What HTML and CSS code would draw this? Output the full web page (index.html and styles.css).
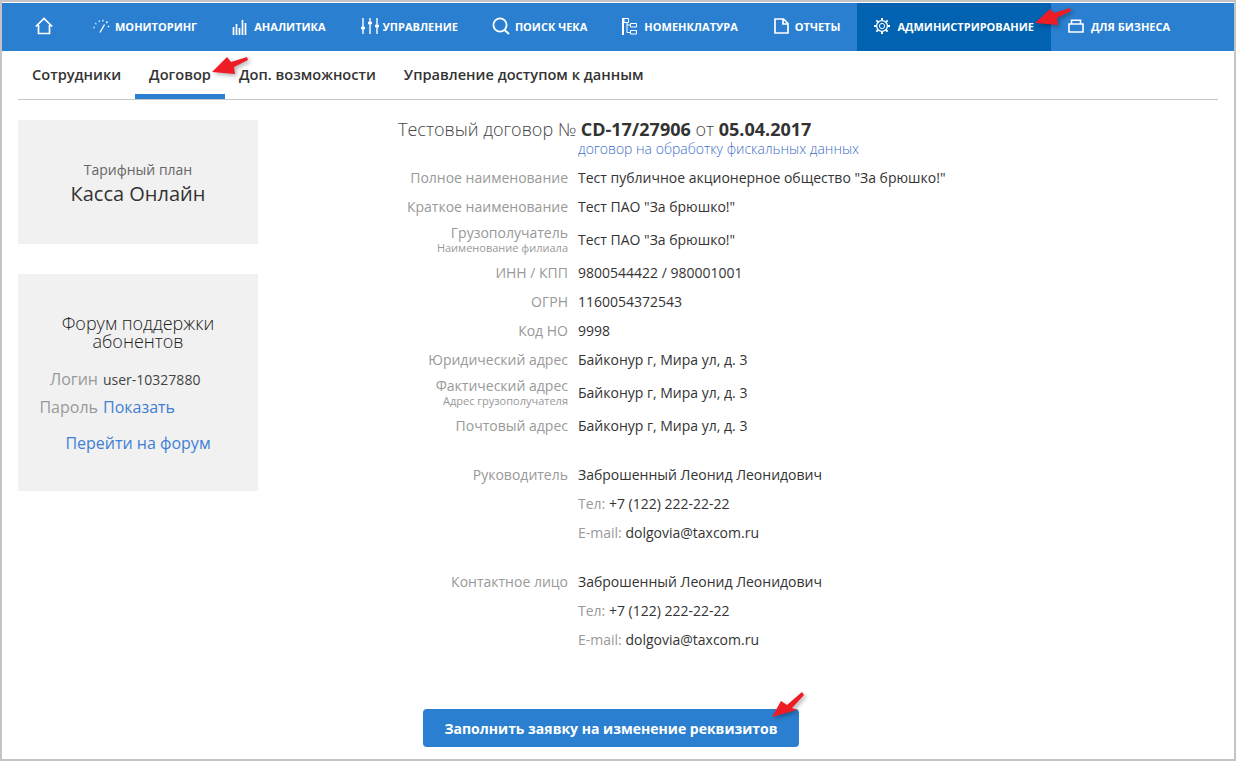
FILE: index.html
```html
<!DOCTYPE html>
<html lang="ru">
<head>
<meta charset="utf-8">
<title>Договор</title>
<link rel="stylesheet" href="styles.css">
</head>
<body>
<div class="frame">
  <nav class="nav">
    <a class="nav-item nav-home"><svg class="ico" width="18" height="18" viewBox="0 0 18 18"><path d="M.8 9.5 9 1.5l8.2 8M3.5 8v8.5h11V8" fill="none" stroke="#fff" stroke-width="1.7"/></svg></a>
    <a class="nav-item nav-wide"><svg class="ico" width="18" height="16" viewBox="0 0 18 16"><g fill="none" stroke="#fff" stroke-width="1.3"><path d="M1 9.5h2" stroke-opacity=".6"/><path d="M3 5 4.5 6.2" stroke-opacity=".7"/><path d="M7 2.5 7.6 4" stroke-opacity=".8"/><path d="M11 1.8 10.8 3.4"/><path d="M15.5 3.5 14.3 5"/><path d="M17 8 16 9"/><path d="M8 14.5 12.5 6.5"/></g></svg>Мониторинг</a>
    <a class="nav-item nav-wide"><svg class="ico ico-7" width="15" height="17" viewBox="0 0 15 17"><path d="M1.5 9v8M4.5 6v11M7.5 10v7M10.5 2v15M13.5 5v12" stroke="#fff" stroke-width="1.7"/></svg>Аналитика</a>
    <a class="nav-item"><svg class="ico ico-4" width="18" height="18" viewBox="0 0 18 18"><path d="M2 1v16M9 1v16M16 1v16" stroke="#fff" stroke-width="1.4"/><path d="M0 11h4M7 6h4M14 9h4" stroke="#fff" stroke-width="2.4"/></svg>Управление</a>
    <a class="nav-item"><svg class="ico" width="18" height="18" viewBox="0 0 18 18"><circle cx="8" cy="8" r="6.6" fill="none" stroke="#fff" stroke-width="1.8"/><path d="M12.5 13 17 17" stroke="#fff" stroke-width="2"/></svg>Поиск чека</a>
    <a class="nav-item"><svg class="ico ico-7" width="16" height="17" viewBox="0 0 16 17"><path d="M2 0v17" stroke="#fff" stroke-width="2"/><path d="M3 .5h4.5v4H3zM9.5 5.5h6v3.5h-6zM9.5 12.5h6v3.5h-6zM6 4.5v10h3.5M6 7h3.5" fill="none" stroke="#fff" stroke-width="1"/></svg>Номенклатура</a>
    <a class="nav-item"><svg class="ico ico-doc" width="15" height="16" viewBox="0 0 15 16"><path d="M1 1h8.5L14 5.5V15H1zM9 1v5h5" fill="none" stroke="#fff" stroke-width="1.7"/></svg>Отчеты</a>
    <a class="nav-item nav-active"><svg class="ico ico-7" width="16" height="16" viewBox="0 0 16 16"><circle cx="8" cy="8" r="5.4" fill="none" stroke="#fff" stroke-width="1.3"/><circle cx="8" cy="8" r="2.6" fill="none" stroke="#fff" stroke-width="1"/><path d="M8 0v2.5M8 13.5V16M0 8h2.5M13.5 8H16M2.4 2.4l1.8 1.8M11.8 11.8l1.8 1.8M13.6 2.4l-1.8 1.8M4.2 11.8l-1.8 1.8" stroke="#fff" stroke-width="2"/></svg>Администрирование</a>
    <a class="nav-item"><svg class="ico ico-7" width="16" height="14" viewBox="0 0 16 14"><path d="M1 5h14v8H1zM3.5 5V1.2h9V5" fill="none" stroke="#fff" stroke-width="1.6"/></svg>Для бизнеса</a>
  </nav>

  <div class="tabs">
    <a class="tab">Сотрудники</a>
    <a class="tab tab-active">Договор</a>
    <a class="tab">Доп. возможности</a>
    <a class="tab">Управление доступом к данным</a>
  </div>

  <div class="content">
    <aside class="side">
      <section class="card card-plan">
        <div class="plan-label">Тарифный план</div>
        <div class="plan-name">Касса Онлайн</div>
      </section>
      <section class="card card-forum">
        <h3 class="forum-title">Форум поддержки абонентов</h3>
        <div class="forum-row forum-login"><span class="forum-key">Логин</span><span class="forum-user">user-10327880</span></div>
        <div class="forum-row forum-pass"><span class="forum-key">Пароль</span><a class="link">Показать</a></div>
        <a class="link forum-go">Перейти на форум</a>
      </section>
    </aside>

    <main class="main">
      <div class="head">
        <div class="head-title">Тестовый договор № <b>CD-17/27906</b> от <b>05.04.2017</b></div>
        <a class="head-sub">договор на обработку фискальных данных</a>
      </div>

      <div class="group">
        <div class="row"><div class="key">Полное наименование</div><div class="val">Тест публичное акционерное общество "За брюшко!"</div></div>
        <div class="row"><div class="key">Краткое наименование</div><div class="val">Тест ПАО "За брюшко!"</div></div>
        <div class="row row-tall"><div class="key">Грузополучатель<small>Наименование филиала</small></div><div class="val">Тест ПАО "За брюшко!"</div></div>
        <div class="row"><div class="key">ИНН / КПП</div><div class="val">9800544422 / 980001001</div></div>
        <div class="row"><div class="key">ОГРН</div><div class="val">1160054372543</div></div>
        <div class="row"><div class="key">Код НО</div><div class="val">9998</div></div>
        <div class="row"><div class="key">Юридический адрес</div><div class="val">Байконур г, Мира ул, д. 3</div></div>
        <div class="row row-tall"><div class="key">Фактический адрес<small>Адрес грузополучателя</small></div><div class="val">Байконур г, Мира ул, д. 3</div></div>
        <div class="row"><div class="key">Почтовый адрес</div><div class="val">Байконур г, Мира ул, д. 3</div></div>
      </div>

      <div class="group">
        <div class="row"><div class="key">Руководитель</div><div class="val">Заброшенный Леонид Леонидович</div></div>
        <div class="row"><div class="key"></div><div class="val"><span class="muted">Тел:</span> +7 (122) 222-22-22</div></div>
        <div class="row"><div class="key"></div><div class="val"><span class="muted">E-mail:</span> dolgovia@taxcom.ru</div></div>
      </div>

      <div class="group">
        <div class="row"><div class="key">Контактное лицо</div><div class="val">Заброшенный Леонид Леонидович</div></div>
        <div class="row"><div class="key"></div><div class="val"><span class="muted">Тел:</span> +7 (122) 222-22-22</div></div>
        <div class="row"><div class="key"></div><div class="val"><span class="muted">E-mail:</span> dolgovia@taxcom.ru</div></div>
      </div>

      <div class="actions"><button class="btn" type="button">Заполнить заявку на изменение реквизитов</button></div>
    </main>
  </div>

  <svg class="arrow arrow-nav" width="44" height="26" viewBox="0 0 44 26"><path d="M1 17 16 3 20 7 36 2 37 5 23 12 24 19z" fill="#ee1c25"/></svg>
  <svg class="arrow arrow-tab" width="44" height="26" viewBox="0 0 44 26"><path d="M1 17 16 2 20 7 36 2 37 5 23 12 24 19z" fill="#ee1c25"/></svg>
  <svg class="arrow arrow-btn" width="40" height="30" viewBox="0 0 40 30"><path d="M1 27 10 11 16 15 31 2 33 5 21 18 26 20z" fill="#ee1c25"/></svg>
</div>
</body>
</html>
```

FILE: styles.css
```css
* { box-sizing: border-box; }
html, body { margin: 0; padding: 0; background: #fff; }
body { font-family: "Open Sans", sans-serif; color: #333; }

.frame {
  position: relative;
  width: 1236px;
  height: 761px;
  overflow: hidden;
  border: 2px solid #c4c4c4;
  padding-top: 1px;
}

.nav {
  display: flex;
  height: 48px;
  padding-left: 16px;
  background: #2b7fd0;
}
.nav-item {
  display: flex;
  align-items: center;
  padding: 0 17px 2px;
  color: #fff;
  font-size: 11px;
  font-weight: 700;
  text-transform: uppercase;
  white-space: nowrap;
}
.nav-home { padding-right: 22px; }
.nav-wide { padding-right: 18px; }
.nav-active { background: #0062b1; }
.ico { flex: none; margin-right: 5px; }
.nav-home .ico { margin-right: 0; }
.ico-4 { margin-right: 4px; }
.ico-7 { margin-right: 7px; }
.ico-doc { margin-left: 2px; margin-right: 6px; }

.tabs {
  display: flex;
  height: 49px;
  margin: 0 16px;
  border-bottom: 1px solid #c8c8c8;
}
.tab {
  display: flex;
  align-items: center;
  height: 48px;
  padding: 2px 14px 0;
  font-size: 14.6px;
  font-weight: 600;
  color: #333;
  border-bottom: 5px solid transparent;
  white-space: nowrap;
}
.tab-active { border-bottom-color: #2b7fd0; }

.content {
  display: flex;
  padding: 20px 16px 0;
}
.side {
  flex: none;
  width: 240px;
  display: flex;
  flex-direction: column;
  gap: 30px;
}
.card {
  background: #f1f1f1;
  text-align: center;
}
.card-plan { height: 124px; padding-top: 41px; }
.plan-label { font-size: 14px; color: #666; line-height: 18px; }
.plan-name { font-size: 20px; color: #333; line-height: 30px; }

.card-forum { height: 217px; padding-top: 40px; }
.forum-title {
  margin: 0 auto;
  width: 180px;
  font-size: 18px;
  font-weight: 300;
  line-height: 18px;
  color: #222;
}
.forum-row {
  display: flex;
  align-items: baseline;
  gap: 5px;
  font-size: 16px;
  line-height: 22px;
  text-align: left;
}
.forum-key { width: 80px; text-align: right; color: #999; }
.forum-user { font-size: 14px; color: #444; }
.forum-login { margin-top: 18px; }
.forum-pass { margin-top: 5px; }
.link { color: #3f7fd4; }
.forum-go { display: block; margin-top: 14px; font-size: 16px; line-height: 22px; }

.main { flex: 1; min-width: 0; }
.head { padding-left: 140px; }
.head-title { font-size: 18px; font-weight: 300; line-height: 18px; color: #444; white-space: nowrap; }
.head-title b { font-weight: 700; color: #333; }
.head-sub {
  display: block;
  margin-top: 2px;
  margin-left: 180px;
  font-size: 14px;
  font-weight: 300;
  line-height: 18px;
  color: #3f6fc8;
}

.group { margin-bottom: 20px; }
.head + .group { margin-top: 5px; }
.row {
  display: flex;
  align-items: center;
  gap: 10px;
  min-height: 29px;
}
.row-tall { min-height: 37px; }
.key {
  flex: none;
  width: 310px;
  font-size: 14px;
  line-height: 16px;
  text-align: right;
  color: #999;
}
.key small {
  display: block;
  font-size: 11px;
  line-height: 14px;
}
.val { font-size: 14px; color: #333; }
.muted { color: #999; }

.actions {
  display: flex;
  margin-top: 55px;
  padding-left: 165px;
}
.btn {
  width: 376px;
  height: 38px;
  border: 0;
  border-radius: 4px;
  background: #2b7fd0;
  color: #fff;
  font-family: inherit;
  font-size: 14px;
  font-weight: 700;
}

.arrow { position: absolute; filter: drop-shadow(2px 2px 2px rgba(0, 0, 0, .3)); }
.arrow-nav { left: 1032px; top: 4px; }
.arrow-tab { left: 209px; top: 53px; }
.arrow-btn { left: 769px; top: 688px; }
```
